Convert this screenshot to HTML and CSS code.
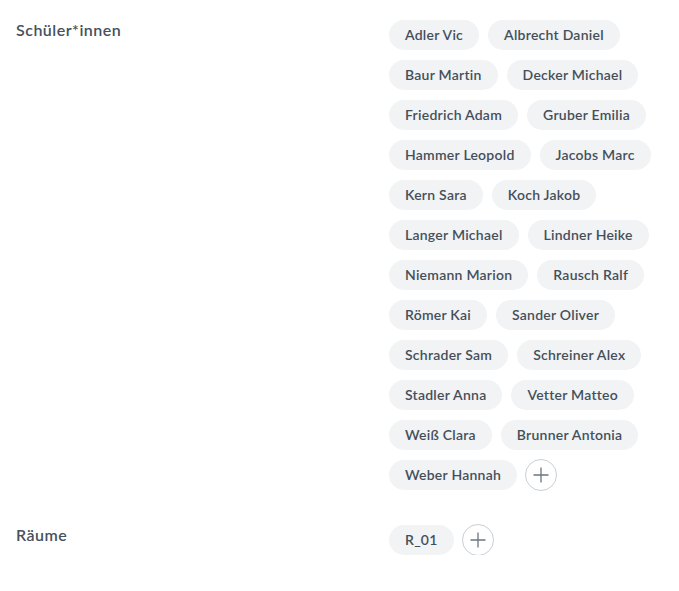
FILE: index.html
```html
<!DOCTYPE html>
<html lang="de">
<head>
<meta charset="utf-8">
<title>Zuordnung</title>
<link rel="stylesheet" href="styles.css">
</head>
<body>
<div class="page">
  <section class="field">
    <div class="label">Schüler*innen</div>
    <div class="chips">
      <span class="chip">Adler Vic</span>
      <span class="chip">Albrecht Daniel</span>
      <span class="chip">Baur Martin</span>
      <span class="chip">Decker Michael</span>
      <span class="chip">Friedrich Adam</span>
      <span class="chip">Gruber Emilia</span>
      <span class="chip">Hammer Leopold</span>
      <span class="chip">Jacobs Marc</span>
      <span class="chip">Kern Sara</span>
      <span class="chip">Koch Jakob</span>
      <span class="chip">Langer Michael</span>
      <span class="chip">Lindner Heike</span>
      <span class="chip">Niemann Marion</span>
      <span class="chip">Rausch Ralf</span>
      <span class="chip">Römer Kai</span>
      <span class="chip">Sander Oliver</span>
      <span class="chip">Schrader Sam</span>
      <span class="chip">Schreiner Alex</span>
      <span class="chip">Stadler Anna</span>
      <span class="chip">Vetter Matteo</span>
      <span class="chip">Weiß Clara</span>
      <span class="chip">Brunner Antonia</span>
      <span class="chip">Weber Hannah</span>
      <button class="add" aria-label="Hinzufügen"><svg viewBox="0 0 32 32" width="32" height="32"><path d="M16 8.5v15M8.5 16h15" stroke="#6b7580" stroke-width="1.3" fill="none"/></svg></button>
    </div>
  </section>
  <section class="field rooms">
    <div class="label">Räume</div>
    <div class="chips">
      <span class="chip">R_01</span>
      <button class="add" aria-label="Hinzufügen"><svg viewBox="0 0 32 32" width="32" height="32"><path d="M16 8.5v15M8.5 16h15" stroke="#6b7580" stroke-width="1.3" fill="none"/></svg></button>
    </div>
  </section>
</div>
</body>
</html>
```
FILE: styles.css
```css
* { box-sizing: border-box; }
html, body { margin: 0; padding: 0; background: #fff; }
body {
  font-family: Lato, "Noto Sans", sans-serif;
  color: #3e4852;
}
.page {
  padding: 20px 16px 0 16px;
}
.field {
  display: grid;
  grid-template-columns: 373px 274px;
}
.rooms { margin-top: 35px; }
.label {
  font-size: 16px;
  font-weight: 600;
  line-height: 20px;
  letter-spacing: 0.5px;
  color: #47515c;
}
.chips {
  display: flex;
  flex-wrap: wrap;
  align-items: center;
  gap: 10px 9px;
}
.chip {
  height: 30px;
  line-height: 30px;
  padding: 0 16px;
  border-radius: 15px;
  background: #f1f3f5;
  font-size: 14px;
  font-weight: 600;
  letter-spacing: 0.25px;
  color: #454f5a;
  white-space: nowrap;
}
.add {
  width: 32px;
  height: 32px;
  margin: -1px 0 -1px -1px;
  padding: 0;
  border: 1px solid #c9cfd5;
  border-radius: 50%;
  background: #fff;
  display: flex;
  align-items: center;
  justify-content: center;
}
.add svg { display: block; margin: -1px; }
```
